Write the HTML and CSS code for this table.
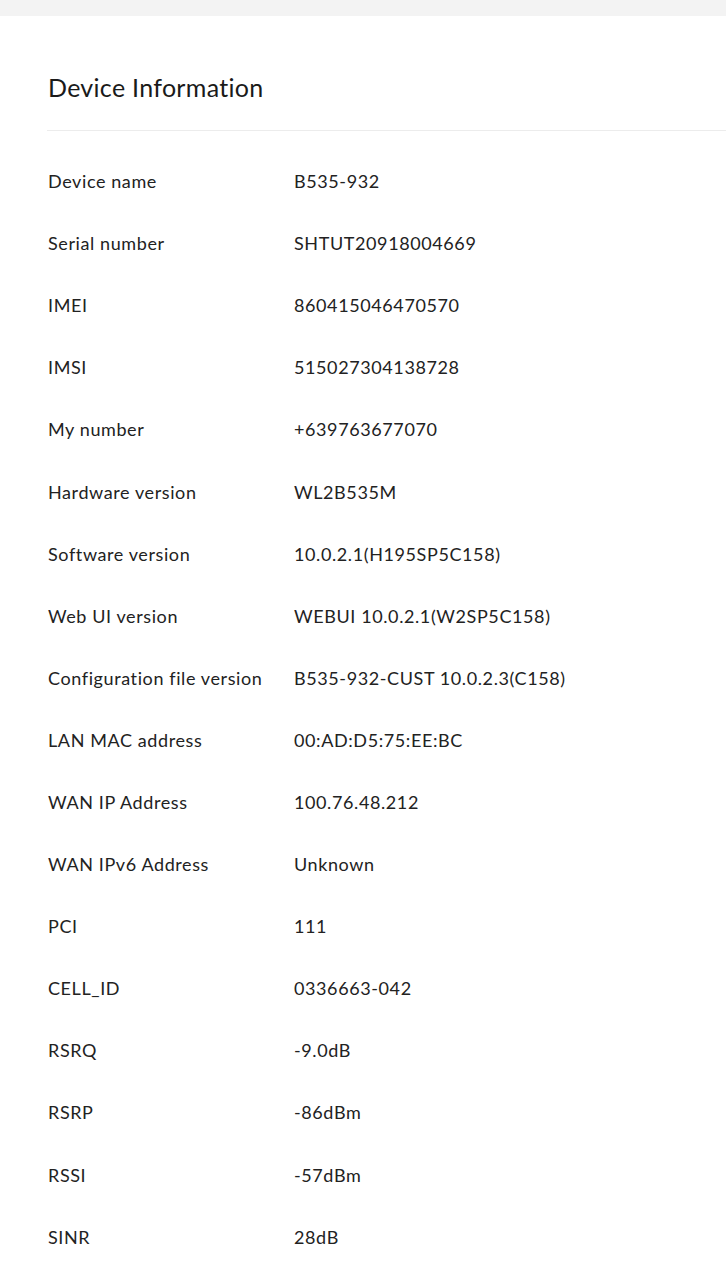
FILE: index.html
```html
<!DOCTYPE html>
<html>
<head>
<meta charset="utf-8">
<link rel="stylesheet" href="styles.css">
</head>
<body>
<div class="topbar"></div>
<main class="card">
  <h1 class="title">Device Information</h1>
  <div class="list">
    <div class="row"><span class="label">Device name</span><span class="value">B535-932</span></div>
    <div class="row"><span class="label">Serial number</span><span class="value">SHTUT20918004669</span></div>
    <div class="row"><span class="label">IMEI</span><span class="value">860415046470570</span></div>
    <div class="row"><span class="label">IMSI</span><span class="value">515027304138728</span></div>
    <div class="row"><span class="label">My number</span><span class="value">+639763677070</span></div>
    <div class="row"><span class="label">Hardware version</span><span class="value">WL2B535M</span></div>
    <div class="row"><span class="label">Software version</span><span class="value">10.0.2.1(H195SP5C158)</span></div>
    <div class="row"><span class="label">Web UI version</span><span class="value">WEBUI 10.0.2.1(W2SP5C158)</span></div>
    <div class="row"><span class="label">Configuration file version</span><span class="value">B535-932-CUST 10.0.2.3(C158)</span></div>
    <div class="row"><span class="label">LAN MAC address</span><span class="value">00:AD:D5:75:EE:BC</span></div>
    <div class="row"><span class="label">WAN IP Address</span><span class="value">100.76.48.212</span></div>
    <div class="row"><span class="label">WAN IPv6 Address</span><span class="value">Unknown</span></div>
    <div class="row"><span class="label">PCI</span><span class="value">111</span></div>
    <div class="row"><span class="label">CELL_ID</span><span class="value">0336663-042</span></div>
    <div class="row"><span class="label">RSRQ</span><span class="value">-9.0dB</span></div>
    <div class="row"><span class="label">RSRP</span><span class="value">-86dBm</span></div>
    <div class="row"><span class="label">RSSI</span><span class="value">-57dBm</span></div>
    <div class="row"><span class="label">SINR</span><span class="value">28dB</span></div>
  </div>
</main>
</body>
</html>
```

FILE: styles.css
```css
html, body {
  margin: 0;
  padding: 0;
}
body {
  background: #f3f3f3;
  font-family: "Lato", "Open Sans", sans-serif;
  color: #222;
  min-height: 100vh;
  display: flex;
  flex-direction: column;
}
.topbar {
  height: 16px;
  flex: none;
  background: #f3f3f3;
}
.card {
  flex: 1;
  background: #fff;
  padding: 56px 0 0 47px;
}
.title {
  margin: 0;
  font-size: 25px;
  font-weight: 400;
  line-height: 30px;
  letter-spacing: 0.3px;
  padding-left: 1px;
  padding-bottom: 28px;
  border-bottom: 1px solid #ececec;
  color: #1a1a1a;
}
.list {
  padding-top: 19px;
  padding-left: 1px;
}
.row {
  display: flex;
  align-items: center;
  height: 62.1px;
  font-size: 18px;
  letter-spacing: 0.6px;
}
.label {
  width: 246px;
  flex: none;
  color: #222;
}
.value {
  color: #222;
}
```
